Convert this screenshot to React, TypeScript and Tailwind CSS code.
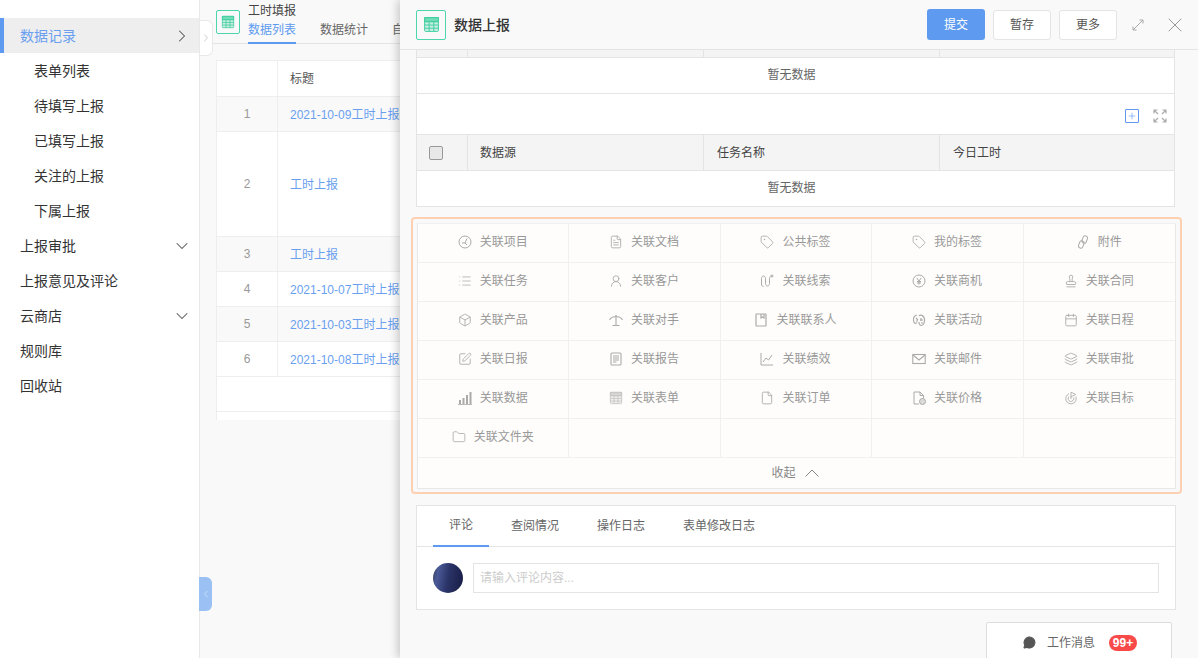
import type { ReactNode } from 'react';
import {
  Box, Calendar, ChevronDown, ChevronLeft, ChevronRight, File, FileText, Folder,
  Goal, Layers, List, MessageCircle, Plus, SquarePen, Stamp, Tag, UserRound, X,
} from 'lucide-react';

const font = 'font-["Liberation_Sans","Noto_Sans_CJK_SC",sans-serif]';

const TableIcon = ({ className }: { className: string }) => (
  <svg viewBox="0 0 16 16" className={className} fill="none" stroke="currentColor" strokeWidth="0.9">
    <rect x="1.500" y="1.500" width="13" height="13" rx="1" fill="currentColor" fillOpacity="0.25" />
    <rect x="1.500" y="1.500" width="13" height="3.500" fill="currentColor" fillOpacity="0.6" />
    <path d="M1.500 5.500h13M1.500 8.500h13M1.500 11.500h13M5.800 5.500v9M10.200 5.500v9" />
  </svg>
);

const line = { fill: 'none', stroke: 'currentColor', strokeWidth: 1 };

const icons: Record<string, ReactNode> = {
  project: (
    <svg viewBox="0 0 14 14" {...line}>
      <circle cx="7" cy="7" r="6" />
      <path d="M9 3.500 7 8H4M7 8l2 2" />
    </svg>
  ),
  doc: <FileText strokeWidth={1.5} />,
  tag: <Tag strokeWidth={1.5} />,
  clip: (
    <svg viewBox="0 0 14 14" {...line}>
      <rect x="6.500" y="0.800" width="4.500" height="7.500" rx="2.200" transform="rotate(20 8.700 4.500)" />
      <rect x="3" y="5.700" width="4.500" height="7.500" rx="2.200" transform="rotate(20 5.200 9.500)" />
    </svg>
  ),
  list: <List strokeWidth={1.3} />,
  user: <UserRound strokeWidth={1.5} />,
  lead: (
    <svg viewBox="0 0 14 14" {...line}>
      <path d="M3.500 12.500c-1.500 0-2-1-2-2.500V4.500C1.500 3 2.500 2 3.500 2S5.500 3 5.500 4.500v5C5.500 11 6.500 12 7.500 12s2-1 2-2.500v-5C9.500 3 10.500 2 11.500 2" />
      <circle cx="12" cy="2" r="1" />
    </svg>
  ),
  yen: (
    <svg viewBox="0 0 14 14" {...line}>
      <circle cx="7" cy="7" r="6" />
      <path d="M4.800 4 7 7l2.200-3M7 7v3.500M5 7.500h4M5 9h4" />
    </svg>
  ),
  stamp: <Stamp strokeWidth={1.5} />,
  box: <Box strokeWidth={1.5} />,
  rival: (
    <svg viewBox="0 0 14 14" fill="none" stroke="currentColor" strokeWidth="1.100">
      <path d="M.5 7C2 4.500 4.500 3.500 7 3.500S12 4.500 13.500 7M7 2v10M3.500 12.500h7" />
    </svg>
  ),
  contact: (
    <svg viewBox="0 0 14 14" fill="none" stroke="currentColor" strokeWidth="1.200">
      <rect x="2" y="1" width="10" height="12" rx="0.500" />
      <path d="M7 1v4l1.500-1L10 5V1" />
    </svg>
  ),
  activity: (
    <svg viewBox="0 0 14 14" fill="none" stroke="currentColor" strokeWidth="1.200">
      <path d="M5 2C3 2 1 4.500 1.500 7.500S4 11 5 9.500M7 3c2-2 5 0 5.500 3s-1 6.500-3 6.500-2.500-2-2.500-3.500" />
      <path d="M4 5l2 2M4 8h2M9 5v3M8 7h3M9 10h2" />
    </svg>
  ),
  calendar: <Calendar strokeWidth={1.5} />,
  edit: <SquarePen strokeWidth={1.5} />,
  report: (
    <svg viewBox="0 0 14 14" fill="none" stroke="currentColor" strokeWidth="1.100">
      <rect x="2" y="1" width="10" height="12" rx="1" />
      <path d="M4 4h6M4 6h6M4 8h6M4 10h3.500" />
    </svg>
  ),
  chart: (
    <svg viewBox="0 0 14 14" fill="none" stroke="currentColor" strokeWidth="1">
      <path d="M1 1v12h12M3 10l3-4 2.500 2L12 3" />
    </svg>
  ),
  mail: (
    <svg viewBox="0 0 14 14" fill="none" stroke="currentColor" strokeWidth="1.100">
      <rect x="0.800" y="2.500" width="12.400" height="9" />
      <path d="M1 3l6 5 6-5" />
    </svg>
  ),
  layers: <Layers strokeWidth={1.5} />,
  bars: (
    <svg viewBox="0 0 14 14" fill="currentColor">
      <rect x="1" y="9" width="2" height="4" />
      <rect x="4.500" y="7" width="2" height="6" />
      <rect x="8" y="4" width="2" height="9" />
      <rect x="11.500" y="1" width="2" height="12" />
      <rect x="0" y="13" width="14" height="0.800" />
    </svg>
  ),
  form: <TableIcon className="text-[#c4c4c4]" />,
  order: <File strokeWidth={1.5} />,
  price: (
    <svg viewBox="0 0 14 14" {...line}>
      <path d="M7 13H2V1h6l3.500 3.500V7M8 1v3.500h3.500" />
      <circle cx="10.500" cy="10.500" r="3" fill="currentColor" fillOpacity="0.4" />
    </svg>
  ),
  goal: <Goal strokeWidth={1.5} />,
  folder: <Folder strokeWidth={1.4} />,
};

const menu = [
  { label: '表单列表', sub: true },
  { label: '待填写上报', sub: true },
  { label: '已填写上报', sub: true },
  { label: '关注的上报', sub: true },
  { label: '下属上报', sub: true },
  { label: '上报审批', arrow: true },
  { label: '上报意见及评论' },
  { label: '云商店', arrow: true },
  { label: '规则库' },
  { label: '回收站' },
];

const rows = [
  { no: '1', title: '2021-10-09工时上报', h: 'h-[35px]', bg: 'bg-[#f9f9f9]' },
  { no: '2', title: '工时上报', h: 'h-[105px]', bg: 'bg-white' },
  { no: '3', title: '工时上报', h: 'h-[35px]', bg: 'bg-[#f9f9f9]' },
  { no: '4', title: '2021-10-07工时上报', h: 'h-[35px]', bg: 'bg-white' },
  { no: '5', title: '2021-10-03工时上报', h: 'h-[35px]', bg: 'bg-[#f9f9f9]' },
  { no: '6', title: '2021-10-08工时上报', h: 'h-[35px]', bg: 'bg-white' },
];

const links: [string, string][] = [
  ['关联项目', 'project'], ['关联文档', 'doc'], ['公共标签', 'tag'], ['我的标签', 'tag'], ['附件', 'clip'],
  ['关联任务', 'list'], ['关联客户', 'user'], ['关联线索', 'lead'], ['关联商机', 'yen'], ['关联合同', 'stamp'],
  ['关联产品', 'box'], ['关联对手', 'rival'], ['关联联系人', 'contact'], ['关联活动', 'activity'], ['关联日程', 'calendar'],
  ['关联日报', 'edit'], ['关联报告', 'report'], ['关联绩效', 'chart'], ['关联邮件', 'mail'], ['关联审批', 'layers'],
  ['关联数据', 'bars'], ['关联表单', 'form'], ['关联订单', 'order'], ['关联价格', 'price'], ['关联目标', 'goal'],
  ['关联文件夹', 'folder'], ['', ''], ['', ''], ['', ''], ['', ''],
];

const EmptyRow = () => (
  <div className="h-[36px] pb-[2px] pr-2 flex items-center justify-center border-b border-[#e4e4e4] bg-white text-xs text-[#666]">暂无数据</div>
);

const HeadCols = ({ labels }: { labels: string[] }) => (
  <div className="grid grid-cols-[51px_236px_236px_1fr] h-full">
    <div className="border-r border-[#e4e4e4] flex items-center pl-3">
      {labels.length > 0 && <span className="w-[14px] h-[14px] rounded-[2px] border border-[#999] bg-[#e8e8e8]" />}
    </div>
    {[0, 1, 2].map((i) => (
      <div key={i} className={`flex items-center text-xs text-[#444] ${i === 0 ? 'pl-3' : 'pl-[13px]'} ${i < 2 ? 'border-r border-[#e4e4e4]' : ''}`}>
        {labels[i]}
      </div>
    ))}
  </div>
);

export default function App() {
  return (
    <div className={`${font} relative w-[1198px] h-[658px] overflow-hidden flex bg-[#f9f9f9]`}>
      {/* Left menu */}
      <aside className="w-[200px] shrink-0 h-full bg-white border-r border-[#e8e8e8] pt-[18px]">
        <div className="h-[35px] bg-[#eeeeee] border-l-4 border-[#5e9bf0] pl-4 pr-[7px] flex items-center justify-between text-sm text-[#6a9ff0]">
          数据记录
          <ChevronRight className="w-5 h-5 text-[#555]" strokeWidth={1.25} />
        </div>
        {menu.map((m) => (
          <div
            key={m.label}
            className={`h-[35px] flex items-center justify-between text-sm text-[#333] pr-[7px] ${m.sub ? 'pl-[34px]' : 'pl-5'}`}
          >
            {m.label}
            {m.arrow && <ChevronDown className="w-5 h-5 text-[#555]" strokeWidth={1.25} />}
          </div>
        ))}
      </aside>

      {/* Page behind the drawer */}
      <main className="flex-1 min-w-0">
        <div className="h-[44px] border-b border-[#e4e4e4] pl-4 flex items-center gap-2">
          <div className="w-6 h-6 border border-[#4dd6ac] rounded-[2px] flex items-center justify-center text-[#3ecf9f]">
            <TableIcon className="w-[14px] h-[14px]" />
          </div>
          <div className="text-xs h-full">
            <div className="pt-[3px] leading-[17px] text-[#444]">工时填报</div>
            <div className="flex gap-6 leading-[20px]">
              <span className="text-[#5e9bf0] border-b-2 border-[#5e9bf0] h-[24px]">数据列表</span>
              <span className="text-[#666]">数据统计</span>
              <span className="text-[#666]">自定义</span>
            </div>
          </div>
        </div>
        <div className="ml-4 mt-4 w-[960px] h-[360px] overflow-hidden bg-white border-l border-t border-[#eeeeee] text-xs">
          <div className="h-[36px] flex border-b border-[#eeeeee]">
            <div className="w-[61px] border-r border-[#eeeeee]" />
            <div className="pl-3 flex items-center text-[#555]">标题</div>
          </div>
          {rows.map((r) => (
            <div key={r.no} className={`${r.h} ${r.bg} flex border-b border-[#eeeeee]`}>
              <div className="w-[61px] border-r border-[#eeeeee] flex items-center justify-center text-[#999]">{r.no}</div>
              <div className="pl-3 pt-[1px] flex items-center text-[#6a9ff0]">{r.title}</div>
            </div>
          ))}
          <div className="h-[35px] border-b border-[#eeeeee]" />
        </div>
      </main>

      {/* Collapse handles */}
      <div className="absolute left-[200px] top-[20px] w-[13px] h-[36px] bg-white border border-l-0 border-[#e8e8e8] rounded-r-md flex items-center justify-center">
        <ChevronRight className="w-3 h-3 text-[#bbb]" strokeWidth={1.5} />
      </div>
      <div className="absolute left-[199px] top-[577px] w-[13px] h-[34px] bg-[#9bc0f3] rounded-r-md flex items-center justify-center">
        <ChevronLeft className="w-3 h-3 text-[#d4e4fa]" strokeWidth={1.5} />
      </div>

      {/* Drawer */}
      <section className="absolute left-[400px] top-0 right-0 bottom-0 bg-[#f9f9f9] shadow-[-3px_0_8px_rgba(0,0,0,0.18)]">
        <header className="h-[50px] border-b border-[#e4e4e4] pl-4 pr-4 flex items-center">
          <div className="w-[30px] h-[30px] border border-[#4dd6ac] rounded-[2px] flex items-center justify-center text-[#3ecf9f]">
            <TableIcon className="w-[17px] h-[17px]" />
          </div>
          <h1 className="ml-2 text-sm font-medium text-[#333]">数据上报</h1>
          <div className="ml-auto flex items-center gap-2 text-xs">
            <button className="w-[58px] h-[31px] rounded-[3px] bg-[#5e9bf0] text-white">提交</button>
            <button className="w-[58px] h-[30px] rounded-[3px] bg-white border border-[#e4e4e4] text-[#555]">暂存</button>
            <button className="w-[58px] h-[30px] rounded-[3px] bg-white border border-[#e4e4e4] text-[#555]">更多</button>
          </div>
          <svg viewBox="0 0 12 12" className="ml-[15px] w-3 h-3 text-[#aaa]" fill="none" stroke="currentColor">
            <path d="M1 11 11 1M7.500 1H11v3.500M1 7.500V11h3.500" />
          </svg>
          <X className="ml-[19px] -mr-[5px] w-6 h-6 text-[#999]" strokeWidth={1} />
        </header>

        <div className="px-4">
          <div className="mr-[7px] border-x border-[#e4e4e4]">
            <div className="h-[8px] bg-[#f4f4f4] border-b border-[#e4e4e4]">
              <HeadCols labels={[]} />
            </div>
            <EmptyRow />
            <div className="h-[41px] bg-white border-b border-[#e4e4e4] flex items-end justify-end gap-[14px] pb-[11px] pr-[7px]">
              <span className="w-[14px] h-[14px] border border-[#5e9bf0] rounded-[1px] flex items-center justify-center text-[#5e9bf0]">
                <Plus className="w-[10px] h-[10px]" strokeWidth={1.5} />
              </span>
              <svg viewBox="0 0 14 14" className="w-[14px] h-[14px] text-[#aaa]" fill="none" stroke="currentColor" strokeWidth="1.200">
                <path d="M1 4.500V1h3.500M1 1l4 4M13 4.500V1H9.500M13 1 9 5M1 9.500V13h3.500M1 13l4-4M13 9.500V13H9.500M13 13 9 9" />
              </svg>
            </div>
            <div className="h-[36px] bg-[#f4f4f4] border-b border-[#e4e4e4]">
              <HeadCols labels={['数据源', '任务名称', '今日工时']} />
            </div>
            <EmptyRow />
          </div>
        </div>

        {/* Related items box */}
        <div className="ml-[11px] mr-[16px] mt-[10px] h-[277px] border-2 border-[#fdd0b1] rounded-[4px] px-[4px] pt-[4px]">
          <div className="bg-[#fefdfb] border-x border-b border-[#e8e8e8] border-t border-t-[#f0f0f0] h-[266px]">
            <div className="grid grid-cols-5">
              {links.map(([label, icon], i) => (
                <div
                  key={i}
                  className={`h-[39px] pb-[2px] pr-[1px] flex items-center justify-center gap-2 border-b border-[#f0f0f0] ${i % 5 < 4 ? 'border-r' : ''} text-xs text-[#999]`}
                >
                  {icon && <span className="w-[14px] h-[14px] text-[#aaa] [&>svg]:w-full [&>svg]:h-full flex">{icons[icon]}</span>}
                  {label}
                </div>
              ))}
            </div>
            <div className="h-[30px] pr-[3px] flex items-center justify-center gap-[9px] text-xs text-[#888]">
              收起
              <svg viewBox="0 0 14 8" className="w-[14px] h-2 text-[#888]" fill="none" stroke="currentColor">
                <path d="M.5 7.500 7 1l6.500 6.500" />
              </svg>
            </div>
          </div>
        </div>

        {/* Comments */}
        <div className="ml-4 mr-[22px] mt-[11px] h-[105px] bg-white border border-[#e4e4e4]">
          <div className="h-[41px] border-b border-[#e4e4e4] pl-4 flex text-xs text-[#666]">
            <span className="w-[56px] h-[41px] pb-[1px] flex items-center justify-center border-b-2 border-[#5e9bf0]">评论</span>
            <span className="ml-[22px] h-[39px] flex items-center">查阅情况</span>
            <span className="ml-[38px] h-[39px] flex items-center">操作日志</span>
            <span className="ml-[38px] h-[39px] flex items-center">表单修改日志</span>
          </div>
          <div className="pl-4 pr-4 pt-4 flex gap-[10px]">
            <div className="w-[30px] h-[30px] rounded-full bg-[linear-gradient(100deg,#3a3f55,#4a5a98_18%,#2b3468_50%,#171c44)]" />
            <div className="flex-1 h-[30px] border border-[#e4e4e4] pl-[6px] flex items-center text-xs text-[#ccc]">请输入评论内容...</div>
          </div>
        </div>

        {/* Work message bar */}
        <div className="absolute left-[586px] top-[622px] w-[186px] h-[40px] bg-white border border-[#ddd] rounded-t-[2px] pl-[36px] pt-[1px] flex items-center text-xs text-[#666]">
          <MessageCircle className="w-[13px] h-[13px] text-[#555] fill-[#555]" />
          <span className="ml-[11px]">工作消息</span>
          <span className="ml-[14px] w-[28px] h-[16px] rounded-full bg-[#f94a4a] text-white font-bold flex items-center justify-center">99+</span>
        </div>
      </section>
    </div>
  );
}
